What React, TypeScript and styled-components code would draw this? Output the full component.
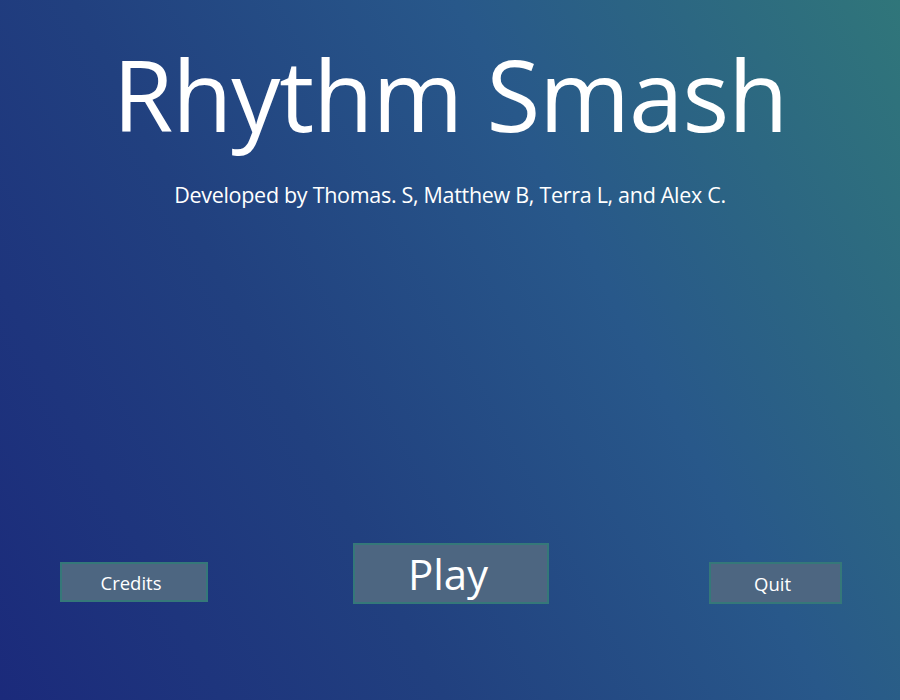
import React from "react";
import styled, { createGlobalStyle } from "styled-components";

const Global = createGlobalStyle`
  html, body { margin: 0; padding: 0; }
  body { font-family: "Open Sans", "Noto Sans", sans-serif; }
`;

const Screen = styled.main`
  width: 900px;
  height: 700px;
  box-sizing: border-box;
  display: flex;
  flex-direction: column;
  align-items: center;
  background: linear-gradient(62deg, #1b2a7b 0%, #21407f 35%, #28588a 65%, #30767a 100%);
  color: #ffffff;
  overflow: hidden;
`;

const Title = styled.h1`
  margin: 36px 0 0;
  font-size: 98px;
  font-weight: 400;
  line-height: 1.2;
  letter-spacing: -1px;
`;

const Credits = styled.p`
  margin: 27px 0 0;
  font-size: 21.5px;
  line-height: 1.3;
  letter-spacing: -0.3px;
`;

const ButtonRow = styled.div`
  margin-top: auto;
  margin-bottom: 96px;
  width: 100%;
  box-sizing: border-box;
  padding: 0 58px 0 60px;
  display: grid;
  grid-template-columns: 1fr auto 1fr;
  align-items: start;
`;

const MenuButton = styled.button<{ $w: number; $h: number; $size: number; $offset: number; $align: string }>`
  justify-self: ${(p) => p.$align};
  margin-top: ${(p) => p.$offset}px;
  width: ${(p) => p.$w}px;
  height: ${(p) => p.$h}px;
  box-sizing: border-box;
  background: #4d6681;
  border: 2px solid #357879;
  color: #ffffff;
  font-family: "Open Sans", "Noto Sans", sans-serif;
  font-size: ${(p) => p.$size}px;
  padding: 0 6px 0 0;
  display: flex;
  align-items: center;
  justify-content: center;
  cursor: pointer;
`;

export default function App() {
  return (
    <>
      <Global />
      <Screen>
        <Title>Rhythm Smash</Title>
        <Credits>Developed by Thomas. S, Matthew B, Terra L, and Alex C.</Credits>
        <ButtonRow>
          <MenuButton $w={148} $h={40} $size={18.5} $offset={19} $align="start">Credits</MenuButton>
          <MenuButton $w={196} $h={61} $size={42} $offset={0} $align="center">Play</MenuButton>
          <MenuButton $w={133} $h={42} $size={18.5} $offset={19} $align="end">Quit</MenuButton>
        </ButtonRow>
      </Screen>
    </>
  );
}
